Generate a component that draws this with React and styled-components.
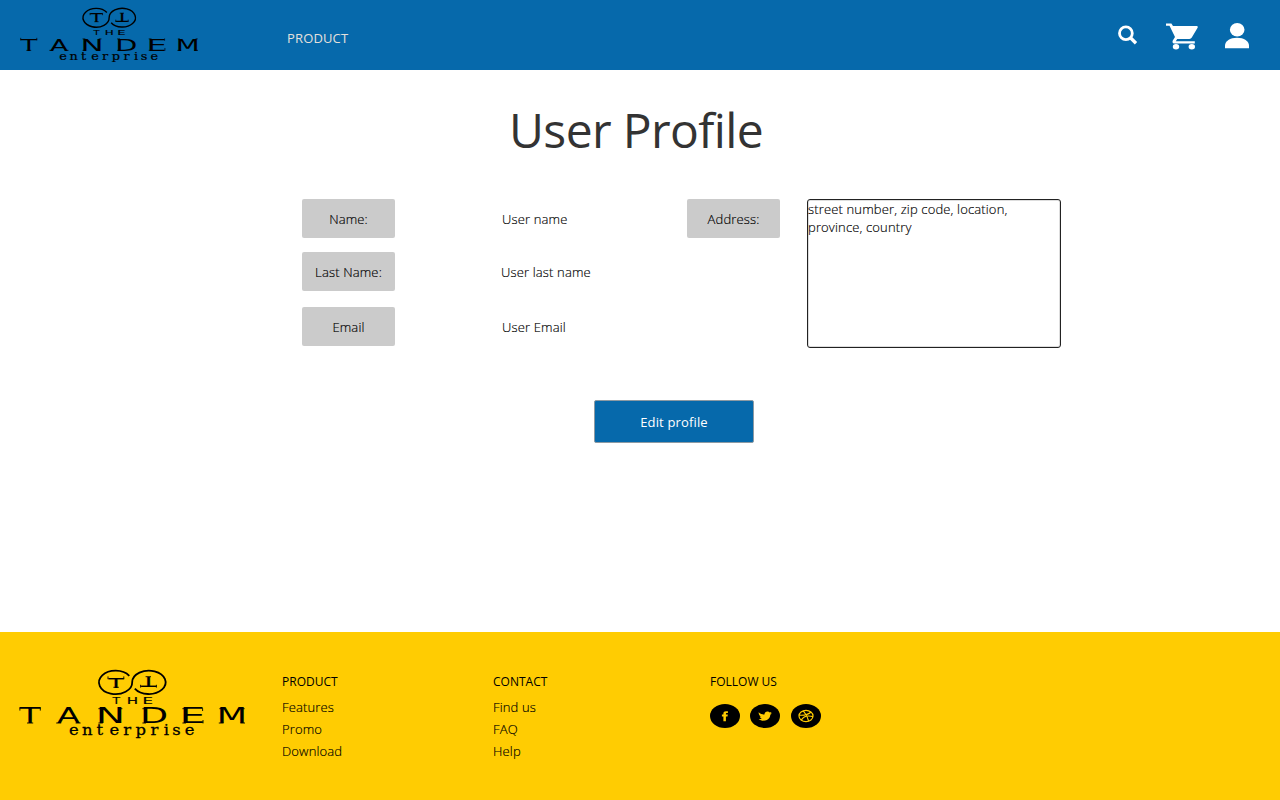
import React from "react";
import styled, { createGlobalStyle, css } from "styled-components";

const GlobalStyle = createGlobalStyle`
  * { box-sizing: border-box; }
  body { margin: 0; background: #fff; }
`;

const Page = styled.div`
  display: flex;
  flex-direction: column;
  width: 1280px;
  height: 800px;
  overflow: hidden;
  font-family: "Open Sans", "Noto Sans", sans-serif;
  font-weight: 300;
  font-size: 13px;
  line-height: 18px;
  letter-spacing: 0.15px;
  color: #000;
`;

const lightText = css`
  -webkit-text-stroke: 0.15px #000;
`;

const Header = styled.header`
  display: flex;
  height: 70px;
  flex: none;
  background: #0669ab;
  padding: 0 31px 0 20px;
`;

const HeaderLogo = styled.div`
  width: 267px;
  padding-top: 7px;
`;

const NavLink = styled.a`
  margin-top: 29px;
  font-weight: 400;
  color: #e4e0dc;
`;

const Actions = styled.div`
  display: flex;
  margin-left: auto;
  padding-top: 22px;
`;

const Action = styled.a`
  display: block;
  margin-left: ${(p) => p.$gap}px;
  svg { display: block; }
`;

const Main = styled.main`
  flex: 1;
  display: flex;
  flex-direction: column;
`;

const Title = styled.h1`
  margin: 27px 0 0;
  padding-left: 509px;
  font-weight: 400;
  font-size: 48px;
  line-height: 66px;
  letter-spacing: -0.62px;
  color: #333;
`;

const Profile = styled.section`
  display: flex;
  margin-top: 36px;
  padding-left: 302px;
  ${lightText}
`;

const Fields = styled.div`
  width: 385px;
`;

const Field = styled.div`
  display: flex;
  align-items: center;
  margin-bottom: ${(p) => p.$space || 0}px;
`;

const Label = styled.div`
  width: 93px;
  height: 39px;
  display: flex;
  align-items: center;
  justify-content: center;
  border-radius: 2px;
  background: #cbcbcb;
`;

const Value = styled.div`
  margin-left: ${(p) => p.$indent}px;
`;

const Address = styled.div`
  width: 254px;
  height: 149px;
  margin-left: 27px;
  padding: 0 30px 0 0;
  border: 1px solid #222;
  border-radius: 3px;
  box-shadow: inset 0 0 0 1px #ddd;
`;

const EditButton = styled.button`
  width: 160px;
  height: 43px;
  margin: 52px 0 0 594px;
  padding: 0;
  border: 1px solid #8d9aa3;
  border-radius: 2px;
  background: #0669ab;
  color: #fff;
  font: inherit;
  font-weight: 400;
  letter-spacing: 0.15px;
`;

const Footer = styled.footer`
  display: flex;
  height: 168px;
  flex: none;
  background: #ffcc02;
`;

const FooterLogo = styled.div`
  width: 282px;
  padding: 37px 0 0 19px;
`;

const Column = styled.nav`
  display: flex;
  flex-direction: column;
  width: ${(p) => p.$width}px;
  padding-top: 41px;
`;

const Heading = styled.h2`
  margin: 0 0 5px;
  font-size: 12px;
  line-height: 18px;
  font-weight: 400;
  letter-spacing: 0;
`;

const FooterLink = styled.a`
  line-height: 22px;
  ${lightText}
`;

const Socials = styled.div`
  display: flex;
  margin-top: 8px;
`;

const Social = styled.a`
  width: 30px;
  height: 24px;
  margin-right: ${(p) => p.$gap || 0}px;
  border-radius: 50%;
  background: #000;
  display: flex;
  align-items: center;
  justify-content: center;
  color: #ffcc02;
`;

/* Ink extents of the capitals in DejaVu Sans, in em: [left, width] */
const ink = {
  T: [0, 0.611],
  A: [0.008, 0.668],
  N: [0.098, 0.552],
  D: [0.098, 0.613],
  E: [0.098, 0.47],
  M: [0.098, 0.667],
  H: [0.098, 0.556],
};

function Capital({ c, x, y, width, size, weight = 0 }) {
  const [left, w] = ink[c];
  const sx = width / (w * size);
  return (
    <text
      transform={`translate(${x - left * size * sx} ${y}) scale(${sx} 1)`}
      fontSize={size}
      stroke={weight ? "#000" : "none"}
      strokeWidth={weight}
    >
      {c}
    </text>
  );
}

const tandem = [
  ["T", 0.8, 20.6],
  ["A", 38.2, 22.4],
  ["N", 80.6, 21.6],
  ["D", 124.6, 22.4],
  ["E", 164.6, 19.2],
  ["M", 201.2, 23.4],
];

const the = [
  ["T", 93.4, 7.6],
  ["H", 109.2, 8.4],
  ["E", 125.2, 7.8],
];

const serifs =
  "M.9 38.4V41.6M21.3 38.4V41.6M8 54H14.2" +
  "M37.2 54H42.2M56.6 54H61.6" +
  "M79.4 54H83.8M79.4 39.7H83M100 39.7H103.4" +
  "M123.4 54H127M123.4 39.7H127" +
  "M163.4 54H167M163.4 39.7H167M183.6 39.2V42M184 51V54.4" +
  "M199.8 54H204.6M221.4 54H226M200.4 39.7H203M223 39.7H225.6";

function Logo({ width, height }) {
  return (
    <svg
      width={width}
      height={height}
      viewBox="0 0 226 71"
      preserveAspectRatio="none"
      fontFamily="'DejaVu Sans', sans-serif"
      letterSpacing="0"
      fontWeight="400"
      fill="#000"
      style={{ display: "block", overflow: "visible" }}
    >
      <path
        d="M110.3 6.8A16.6 11.7 0 1 0 113.2 13.1A16.7 11.7 0 1 1 115.8 19.6"
        fill="none"
        stroke="#000"
        strokeWidth="1.8"
      />
      <Capital c="T" x={89.4} y={18.5} width={15} size={14.5} weight={0.2} />
      <path d="M89 7.4V10.2M104.8 7.4V10.2M94.4 18.3H99.8" stroke="#000" strokeWidth="0.9" />
      <g transform="rotate(180 113.2 13.1)">
        <Capital c="T" x={89.4} y={18.7} width={15} size={14.5} weight={0.2} />
        <path d="M89 7.6V10.4M104.8 7.6V10.4M94.4 18.5H99.8" stroke="#000" strokeWidth="0.9" />
      </g>
      {the.map(([c, x, w]) => (
        <Capital key={c} c={c} x={x} y={35} width={w} size={7.9} weight={0.15} />
      ))}
      {tandem.map(([c, x, w]) => (
        <Capital key={c} c={c} x={x} y={54.4} width={w} size={20.8} />
      ))}
      <path d={serifs} stroke="#000" strokeWidth="0.9" />
      <text
        transform="translate(49.9 66.4) scale(1.17 1)"
        fontFamily="'DejaVu Serif', serif"
        fontSize="14"
        stroke="#000"
        strokeWidth="0.25"
        x="0 11.2 23.6 34.8 46.4 57 69.8 81 88.4 99"
      >
        enterprise
      </text>
    </svg>
  );
}

export default function App() {
  return (
    <Page>
      <GlobalStyle />
      <Header>
        <HeaderLogo>
          <Logo width={178} height={57} />
        </HeaderLogo>
        <NavLink>PRODUCT</NavLink>
        <Actions>
          <Action $gap={0}>
            <svg width="20" height="24" viewBox="0 0 20 24" fill="none" stroke="#fff">
              <circle cx="7.9" cy="11.2" r="6.4" strokeWidth="2.8" />
              <path d="M12.5 15.8L18 21.2" strokeWidth="3.3" />
            </svg>
          </Action>
          <Action $gap={28}>
            <svg width="32" height="28" viewBox="0 0 32 28" fill="#fff">
              <path d="M0 1.4H5.4L7 4.1H30.8Q32.2 4.4 31.6 5.8L25.8 15.6Q25 17 23.4 17H11.2L9.8 19.2H28.8V21.6H8.5Q5.7 21.2 6.8 18.6L9 15.1L3.5 3.8H0Z" />
              <ellipse cx="10" cy="24.8" rx="3.2" ry="2.7" />
              <ellipse cx="25.8" cy="24.8" rx="3.2" ry="2.7" />
            </svg>
          </Action>
          <Action $gap={27}>
            <svg width="24" height="27" viewBox="0 0 24 27" fill="#fff">
              <ellipse cx="12.2" cy="7.8" rx="7.3" ry="6.8" />
              <path d="M0 26.2V23.6C0 19 5 15.7 12 15.7S24 19 24 23.6V26.2Z" />
            </svg>
          </Action>
        </Actions>
      </Header>

      <Main>
        <Title>User Profile</Title>
        <Profile>
          <Fields>
            <Field $space={14}>
              <Label>Name:</Label>
              <Value $indent={107}>User name</Value>
            </Field>
            <Field $space={16}>
              <Label>Last Name:</Label>
              <Value $indent={106}>User last name</Value>
            </Field>
            <Field>
              <Label>Email</Label>
              <Value $indent={107}>User Email</Value>
            </Field>
          </Fields>
          <Label>Address:</Label>
          <Address>street number, zip code, location, province, country</Address>
        </Profile>
        <EditButton>Edit profile</EditButton>
      </Main>

      <Footer>
        <FooterLogo>
          <Logo width={226} height={71} />
        </FooterLogo>
        <Column $width={211}>
          <Heading>PRODUCT</Heading>
          <FooterLink>Features</FooterLink>
          <FooterLink>Promo</FooterLink>
          <FooterLink>Download</FooterLink>
        </Column>
        <Column $width={217}>
          <Heading>CONTACT</Heading>
          <FooterLink>Find us</FooterLink>
          <FooterLink>FAQ</FooterLink>
          <FooterLink>Help</FooterLink>
        </Column>
        <Column $width={200}>
          <Heading>FOLLOW US</Heading>
          <Socials>
            <Social $gap={10}>
              <svg width="8" height="12" viewBox="0 0 8 12" fill="currentColor">
                <path d="M2.4 11.2V6.6H.9V4.6H2.4V3.5C2.4 1.9 3.4 1.2 5 1.2H6.9V3H5.8C5.1 3 4.9 3.2 4.9 3.8V4.6H6.8L6.5 6.6H4.9V11.2Z" />
              </svg>
            </Social>
            <Social $gap={11}>
              <svg width="14" height="10" viewBox="0 0 14 10" fill="currentColor">
                <path d="M.6 1.3C2.4 3 4.3 3.5 6.4 3.5C6.6 1.5 8 .4 9.6 .5C10.5 .5 11.2 .9 11.7 1.5L13.5 1.1L12.6 2.4L13.9 2.5L12.3 3.8C12.1 7.4 9.3 9.7 5.8 9.7C3.7 9.7 1.8 9.1 .6 8.2C2 8.2 3.2 7.9 4 7.3C2.8 7.1 2 6.5 1.8 5.7L2.8 5.5C1.4 4.8 .7 3.7 .6 1.3Z" />
              </svg>
            </Social>
            <Social>
              <svg width="16" height="14" viewBox="0 0 16 14" fill="none" stroke="currentColor" strokeWidth="1.2">
                <ellipse cx="8" cy="7" rx="7" ry="5.6" />
                <path d="M5.2 1.9C7.8 4.5 9.6 7.8 10.6 12M1.2 6.2C6 6.5 10.4 5.8 13 3M3.3 11.1C5.3 7.5 9.6 6.2 15 7.6" />
              </svg>
            </Social>
          </Socials>
        </Column>
      </Footer>
    </Page>
  );
}
